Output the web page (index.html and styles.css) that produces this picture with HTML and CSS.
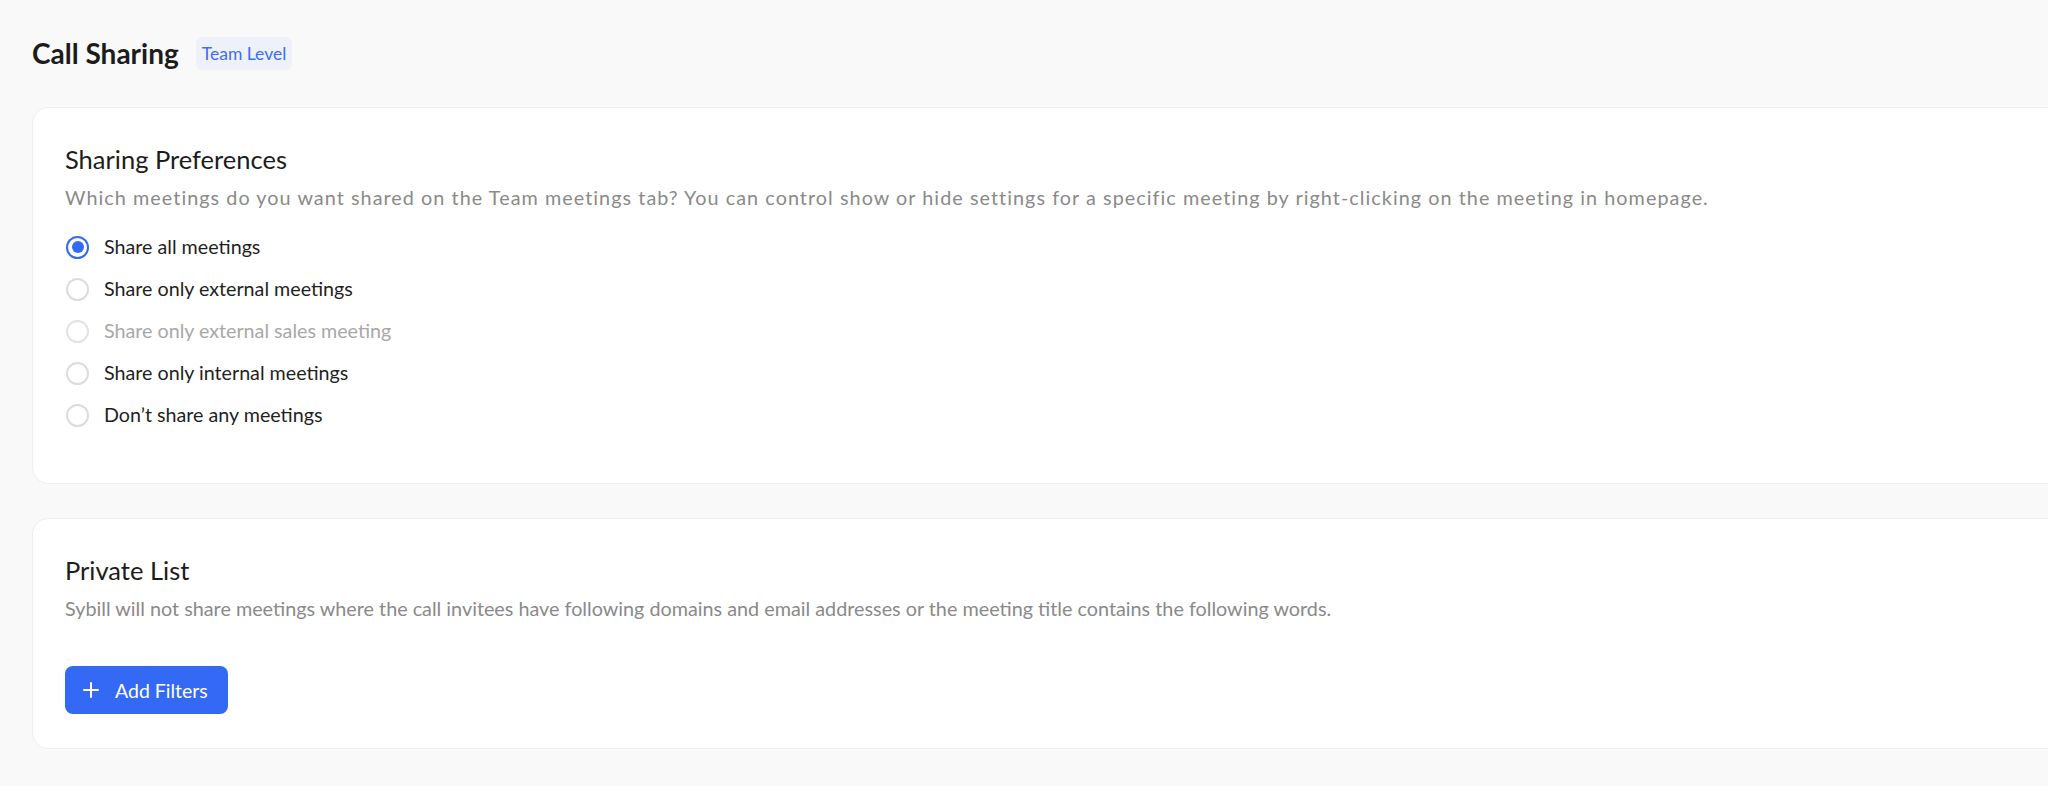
FILE: index.html
```html
<!DOCTYPE html>
<html lang="en">
<head>
  <meta charset="UTF-8">
  <meta name="viewport" content="width=device-width, initial-scale=1.0">
  <title>Call Sharing</title>
  <link rel="stylesheet" href="styles.css">
</head>
<body>

<div class="page">

  <div class="page-header">
    <h1 class="page-title">Call Sharing</h1>
    <span class="level-badge">Team Level</span>
  </div>

  <div class="settings-card">
    <h2 class="card-title">Sharing Preferences</h2>
    <p class="card-desc spaced">Which meetings do you want shared on the Team meetings tab? You can control show or hide settings for a specific meeting by right-clicking on the meeting in homepage.</p>

    <div class="radio-group">
      <label class="radio-row">
        <input type="radio" name="sharing" value="all" checked>
        <span class="radio-mark"></span>
        <span>Share all meetings</span>
      </label>
      <label class="radio-row">
        <input type="radio" name="sharing" value="external">
        <span class="radio-mark"></span>
        <span>Share only external meetings</span>
      </label>
      <label class="radio-row disabled">
        <input type="radio" name="sharing" value="sales" disabled>
        <span class="radio-mark"></span>
        <span>Share only external sales meeting</span>
      </label>
      <label class="radio-row">
        <input type="radio" name="sharing" value="internal">
        <span class="radio-mark"></span>
        <span>Share only internal meetings</span>
      </label>
      <label class="radio-row">
        <input type="radio" name="sharing" value="none">
        <span class="radio-mark"></span>
        <span>Don’t share any meetings</span>
      </label>
    </div>
  </div>

  <div class="settings-card">
    <h2 class="card-title">Private List</h2>
    <p class="card-desc">Sybill will not share meetings where the call invitees have following domains and email addresses or the meeting title contains the following words.</p>

    <button class="add-btn" type="button">
      <svg width="16" height="16" viewBox="0 0 16 16" fill="none" stroke="currentColor" stroke-width="2" stroke-linecap="round">
        <path d="M8 1v14M1 8h14"/>
      </svg>
      <span>Add Filters</span>
    </button>
  </div>

</div>

</body>
</html>
```

FILE: styles.css
```css
html, body {
  margin: 0;
  padding: 0;
}
body {
  font-family: Lato, "Open Sans", Arial, sans-serif;
  background-color: #f9f9f9;
  color: #1f1f1f;
  overflow: hidden;
}
.page {
  padding: 35px 0 0 32px;
}

/* header */
.page-header {
  display: flex;
  align-items: center;
  gap: 17px;
  margin-bottom: 36px;
}
.page-title {
  margin: 0;
  font-size: 28px;
  line-height: 36px;
  font-weight: 700;
  color: #1c1c1c;
}
.level-badge {
  padding: 4px 6px;
  font-size: 17.5px;
  line-height: 25px;
  color: #3d6df2;
  background-color: #eef1f9;
  border-radius: 6px;
}

/* cards run off the right side of the window */
.settings-card {
  width: 2040px;
  box-sizing: border-box;
  background-color: #fff;
  border: 1px solid #eeeeee;
  border-radius: 16px;
  padding: 35px 32px 34px;
  margin-bottom: 34px;
}
.card-title {
  margin: 0;
  font-size: 25.5px;
  line-height: 32px;
  font-weight: 400;
  color: #1c1c1c;
}
.card-desc {
  margin: 10px 0 0;
  font-size: 19.8px;
  line-height: 24px;
  color: #8a8a8a;
}
.card-desc.spaced {
  letter-spacing: 1.05px;
}

/* radios */
.radio-group {
  display: flex;
  flex-direction: column;
  gap: 16px;
  margin: 25px 0 21px;
}
.radio-row {
  display: flex;
  align-items: center;
  gap: 15px;
  height: 26px;
  padding-left: 1px;
  font-size: 19.7px;
  line-height: 26px;
  color: #1f1f1f;
  cursor: pointer;
}
.radio-row input {
  display: none;
}
.radio-mark {
  width: 23px;
  height: 23px;
  box-sizing: border-box;
  border: 2px solid #dcdcdf;
  border-radius: 50%;
  display: flex;
  align-items: center;
  justify-content: center;
  flex-shrink: 0;
}
.radio-row input:checked + .radio-mark {
  border-color: #3369f5;
}
.radio-row input:checked + .radio-mark::after {
  content: "";
  width: 12px;
  height: 12px;
  border-radius: 50%;
  background-color: #3369f5;
}
.radio-row.disabled {
  color: #a8a8a8;
  cursor: default;
}
.radio-row.disabled .radio-mark {
  border-color: #e3e3e6;
}

/* button */
.add-btn {
  margin-top: 46px;
  display: flex;
  align-items: center;
  gap: 16px;
  height: 48px;
  padding: 0 20px 0 18px;
  font-family: inherit;
  font-size: 19.5px;
  color: #fff;
  background-color: #3369f5;
  border: none;
  border-radius: 8px;
  cursor: pointer;
}
.add-btn:hover {
  background-color: #2456dc;
}
```
